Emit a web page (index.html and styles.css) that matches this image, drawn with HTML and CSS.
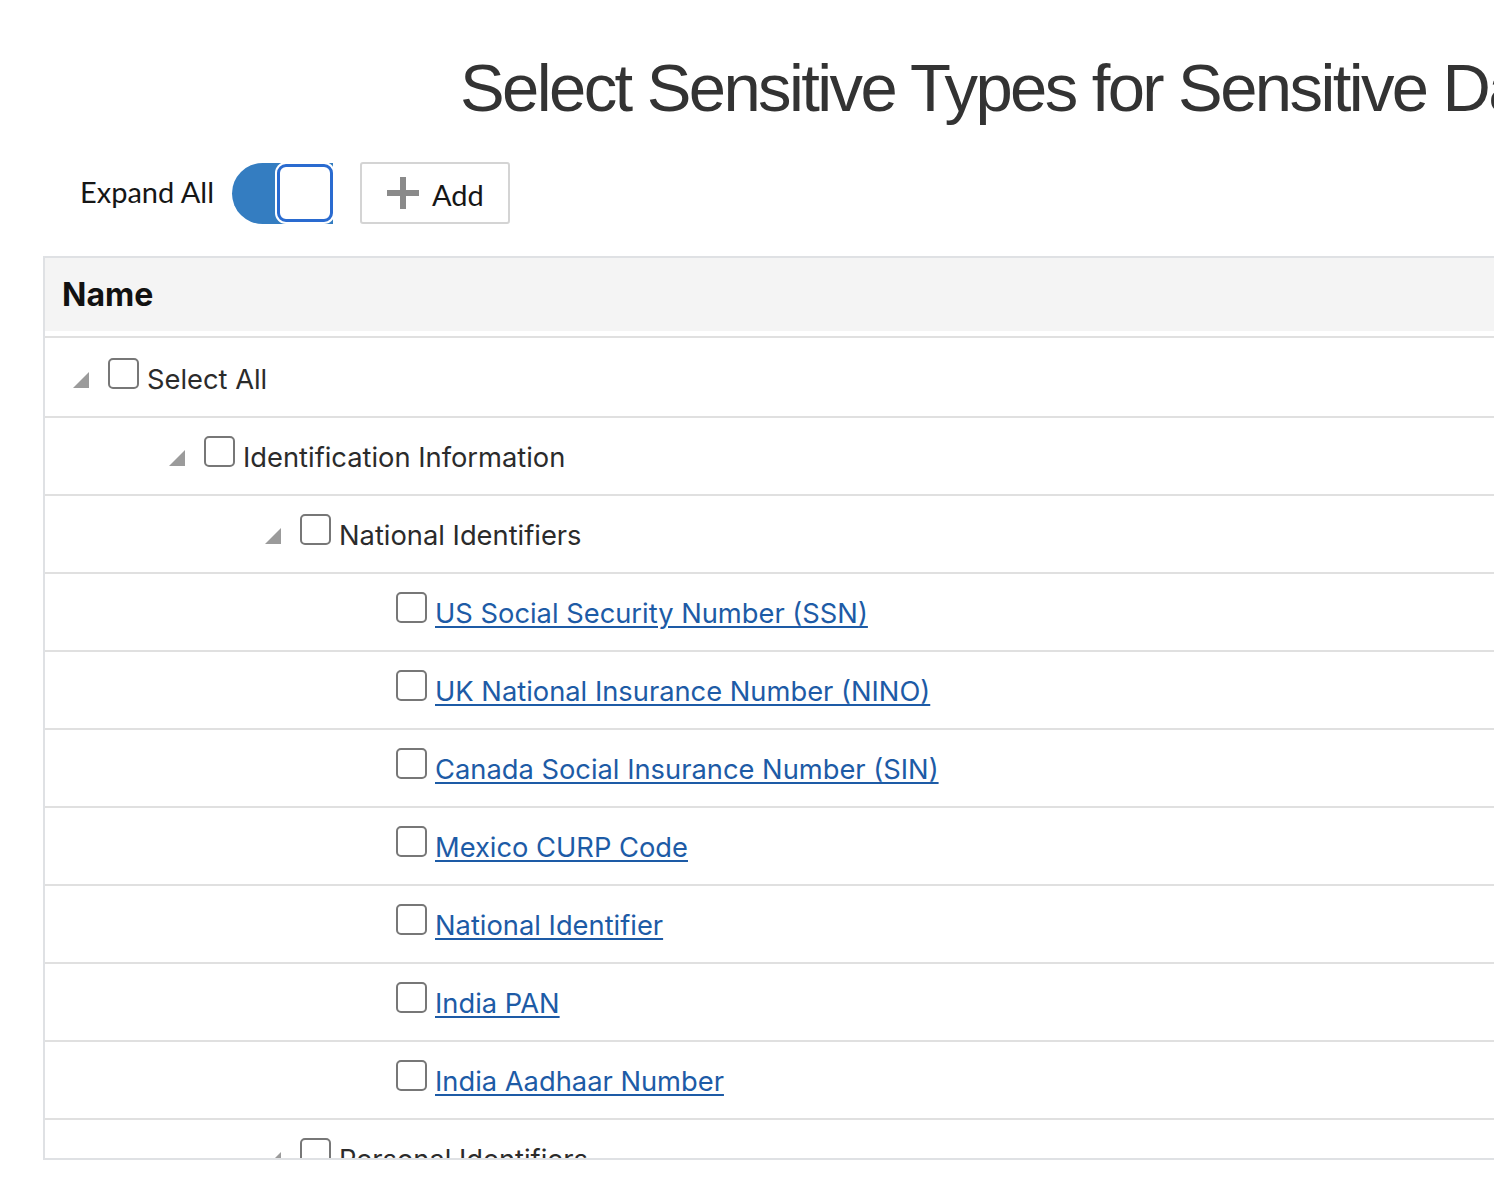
FILE: index.html
```html
<!DOCTYPE html>
<html>
<head>
<meta charset="utf-8">
<link rel="stylesheet" href="styles.css">
</head>
<body>
<h1 class="title">Select Sensitive Types for Sensitive Data Model</h1>
<div class="toolbar">
  <span class="toolbar-label">Expand All</span>
  <div class="switch"><span class="knob"></span></div>
  <button class="add-btn"><svg class="plus" width="32" height="32" viewBox="0 0 32 32"><rect x="13" y="0" width="6" height="32" fill="#8a8a8a"/><rect x="0" y="13" width="32" height="6" fill="#8a8a8a"/></svg><span>Add</span></button>
</div>
<div class="table">
  <div class="thead">Name</div>
  <div class="tbody">
    <div class="row lvl0"><span class="tri"></span><span class="cb"></span><span class="txt">Select All</span></div>
    <div class="row lvl1"><span class="tri"></span><span class="cb"></span><span class="txt">Identification Information</span></div>
    <div class="row lvl2"><span class="tri"></span><span class="cb"></span><span class="txt">National Identifiers</span></div>
    <div class="row leaf"><span class="cb"></span><a class="txt link" href="#">US Social Security Number (SSN)</a></div>
    <div class="row leaf"><span class="cb"></span><a class="txt link" href="#">UK National Insurance Number (NINO)</a></div>
    <div class="row leaf"><span class="cb"></span><a class="txt link" href="#">Canada Social Insurance Number (SIN)</a></div>
    <div class="row leaf"><span class="cb"></span><a class="txt link" href="#">Mexico CURP Code</a></div>
    <div class="row leaf"><span class="cb"></span><a class="txt link" href="#">National Identifier</a></div>
    <div class="row leaf"><span class="cb"></span><a class="txt link" href="#">India PAN</a></div>
    <div class="row leaf"><span class="cb"></span><a class="txt link" href="#">India Aadhaar Number</a></div>
    <div class="row lvl2"><span class="tri"></span><span class="cb"></span><span class="txt">Personal Identifiers</span></div>
  </div>
</div>
</body>
</html>
```

FILE: styles.css
```css
html, body {
  margin: 0;
  padding: 0;
  background: #fff;
  overflow: hidden;
}
body {
  width: 1494px;
  height: 1204px;
  font-family: "Lato", "Open Sans", sans-serif;
  color: #222;
}
.title {
  margin: 0;
  padding: 52px 0 0 460px;
  height: 82px;
  font-family: "Liberation Sans", Arial, sans-serif;
  font-weight: normal;
  font-size: 67px;
  line-height: 72px;
  color: #333;
  white-space: nowrap;
  overflow: hidden;
  letter-spacing: -2.6px;
}
.toolbar {
  display: flex;
  align-items: center;
  margin-top: 28px;
  padding-left: 80px;
  height: 62px;
}
.toolbar-label {
  font-size: 29px;
  color: #161616;
  margin-right: 18px;
  margin-top: -4px;
}
.switch {
  position: relative;
  width: 101px;
  height: 61px;
  border-radius: 31px 0 0 31px;
  background: #347dc1;
  margin-right: 27px;
}
.knob {
  position: absolute;
  left: 45px;
  top: 1px;
  width: 50px;
  height: 52px;
  background: #fff;
  border: 3px solid #2a6bd0;
  border-radius: 9px;
  box-shadow: 0 0 0 2px #fff;
}
.add-btn {
  display: flex;
  align-items: center;
  height: 62px;
  width: 150px;
  padding: 0 0 0 25px;
  background: #fff;
  border: 2px solid #d4d4d4;
  border-radius: 3px;
  font-family: "Lato", sans-serif;
  font-size: 29px;
  color: #161616;
  gap: 13px;
}
.add-btn span { margin-top: 2px; }
.table {
  margin: 32px 0 0 43px;
  height: 900px;
  border-top: 2px solid #dfe1e4;
  border-left: 2px solid #dfe1e4;
  border-bottom: 2px solid #dfe1e4;
  overflow: hidden;
}
.thead {
  height: 73px;
  background: #f4f4f4;
  padding-left: 17px;
  font-family: "Inter", "Liberation Sans", sans-serif;
  font-weight: 700;
  font-size: 32px;
  line-height: 73px;
  color: #111;
  margin-bottom: 5px;
}
.tbody {
  border-top: 2px solid #e0e0e0;
  padding-top: 2px;
}
.row {
  display: flex;
  align-items: flex-start;
  height: 58px;
  border-bottom: 2px solid #e0e0e0;
  padding-top: 18px;
  font-family: "Inter", "Open Sans", sans-serif;
  font-size: 27.3px;
  color: #2b2b2b;
}
.row .tri {
  width: 0;
  height: 0;
  border-left: 16px solid transparent;
  border-bottom: 16px solid #9b9b9b;
  margin-top: 14px;
  margin-right: 19px;
}
.row .cb {
  width: 27px;
  height: 27px;
  border: 2px solid #777;
  border-radius: 5px;
  flex: none;
  margin-right: 8px;
}
.row .txt {
  line-height: 34px;
  margin-top: 5px;
  white-space: nowrap;
}
.row .link {
  color: #1d5ba6;
  text-decoration: underline;
  text-decoration-thickness: 2px;
  text-underline-offset: 3px;
}
.row.lvl0 { padding-left: 28px; }
.row.lvl1 { padding-left: 124px; }
.row.lvl2 { padding-left: 220px; }
.row.leaf { padding-left: 351px; }
```
